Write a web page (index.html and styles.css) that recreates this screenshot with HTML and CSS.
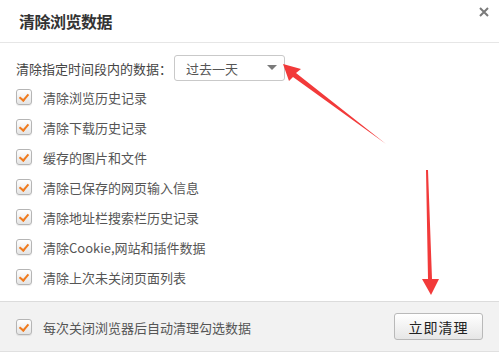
FILE: index.html
```html
<!DOCTYPE html>
<html lang="zh-CN">
<head>
<meta charset="utf-8">
<link rel="stylesheet" href="styles.css">
</head>
<body>
<div class="dialog">
  <div class="header">
    <span class="title">清除浏览数据</span>
    <svg class="close" width="10" height="10" viewBox="0 0 10 10"><path d="M1 1L9 9M9 1L1 9" stroke="#7a7a7a" stroke-width="2"/></svg>
  </div>
  <div class="body">
    <div class="range">
      <span class="range-label">清除指定时间段内的数据：</span>
      <div class="select"><span>过去一天</span><span class="caret"></span></div>
    </div>
    <ul class="list">
      <li><span class="cb"></span>清除浏览历史记录</li>
      <li><span class="cb"></span>清除下载历史记录</li>
      <li><span class="cb"></span>缓存的图片和文件</li>
      <li><span class="cb"></span>清除已保存的网页输入信息</li>
      <li><span class="cb"></span>清除地址栏搜索栏历史记录</li>
      <li><span class="cb"></span>清除Cookie,网站和插件数据</li>
      <li><span class="cb"></span>清除上次未关闭页面列表</li>
    </ul>
  </div>
  <div class="footer">
    <label class="auto"><span class="cb"></span>每次关闭浏览器后自动清理勾选数据</label>
    <button class="btn">立即清理</button>
  </div>
  <svg class="arrows" width="499" height="354" viewBox="0 0 499 354">
    <polygon points="283,64 301,69 296,73 386,144 293,77 289,81" fill="#f23a3a"/>
    <polygon points="426,170 428,170 432,279 439,279 431,295 422,279 428,279" fill="#f23a3a"/>
  </svg>
</div>
</body>
</html>
```

FILE: styles.css
```css
html, body {
  margin: 0;
  padding: 0;
  background: #fff;
}
.dialog {
  position: relative;
  width: 499px;
  height: 354px;
  font-family: "Noto Sans CJK SC", "Liberation Sans", sans-serif;
  color: #555;
  font-size: 13px;
  overflow: hidden;
}
.header {
  height: 42px;
  border-bottom: 1px solid #e6e6e6;
  display: flex;
  align-items: center;
  justify-content: space-between;
  padding: 0 10px 0 19px;
}
.title {
  font-size: 16px;
  font-weight: 600;
  color: #333;
  letter-spacing: -0.5px;
  margin-top: -1px;
}
.close {
  margin-top: -18px;
}
.body {
  padding: 12px 16px 0;
}
.range {
  display: flex;
  align-items: center;
  height: 26px;
  color: #444;
}
.range-label {
  width: 158px;
}
.select {
  box-sizing: border-box;
  width: 111px;
  height: 26px;
  border: 1px solid #c9c9c9;
  border-radius: 3px;
  display: flex;
  align-items: center;
  justify-content: space-between;
  padding: 0 7px 0 11px;
  color: #555;
}
.caret {
  width: 0;
  height: 0;
  border-left: 5px solid transparent;
  border-right: 5px solid transparent;
  border-top: 5px solid #7a7a7a;
  margin-top: -2px;
}
.list {
  list-style: none;
  margin: 1px 0 0;
  padding: 0;
}
.list li {
  height: 30px;
  display: flex;
  align-items: center;
}
.cb {
  box-sizing: border-box;
  width: 16px;
  height: 16px;
  border: 1px solid #b5b5b5;
  border-radius: 3px;
  background: linear-gradient(#ffffff, #e4e4e4);
  margin-right: 11px;
  position: relative;
  flex: none;
  box-shadow: 0 1px 1px rgba(0,0,0,0.08);
}
.cb::after {
  content: "";
  position: absolute;
  left: 4px;
  top: 2px;
  width: 4px;
  height: 7px;
  border-right: 2px solid #f07a1e;
  border-bottom: 2px solid #f07a1e;
  transform: rotate(40deg);
}
.footer {
  position: absolute;
  left: 0;
  top: 301px;
  width: 499px;
  height: 51px;
  box-sizing: border-box;
  border-top: 1px solid #dcdcdc;
  border-bottom: 1px solid #e0e0e0;
  background: #f2f2f2;
  display: flex;
  align-items: center;
  justify-content: space-between;
  padding: 0 16px;
}
.auto {
  display: flex;
  align-items: center;
  color: #555;
  margin-top: 1px;
}
.btn {
  box-sizing: border-box;
  width: 89px;
  height: 27px;
  border: 1px solid #b9b9b9;
  border-radius: 3px;
  background: linear-gradient(#ffffff, #e6e6e6);
  font-family: "Noto Sans CJK SC", sans-serif;
  font-size: 14px;
  color: #222;
  padding: 0;
  margin-top: 0;
  letter-spacing: 1px;
}
.arrows {
  position: absolute;
  left: 0;
  top: 0;
  pointer-events: none;
}
```
